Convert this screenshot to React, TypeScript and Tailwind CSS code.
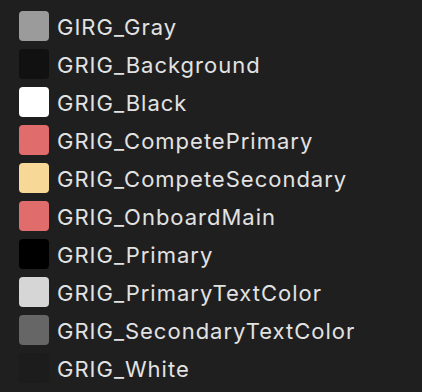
const colors = [
  { name: "GIRG_Gray", swatch: "bg-[#9b9b9b]" },
  { name: "GRIG_Background", swatch: "bg-[#111111]" },
  { name: "GRIG_Black", swatch: "bg-[#ffffff]" },
  { name: "GRIG_CompetePrimary", swatch: "bg-[#e06d6b]" },
  { name: "GRIG_CompeteSecondary", swatch: "bg-[#f8d896]" },
  { name: "GRIG_OnboardMain", swatch: "bg-[#e06d6b]" },
  { name: "GRIG_Primary", swatch: "bg-[#000000]" },
  { name: "GRIG_PrimaryTextColor", swatch: "bg-[#d6d6d6]" },
  { name: "GRIG_SecondaryTextColor", swatch: "bg-[#666666]" },
  { name: "GRIG_White", swatch: "bg-[#1c1c1c]" },
];

export default function App() {
  return (
    <div className="w-[422px] h-[392px] bg-[#1f1f1f] pt-[11px] pl-[19px] font-['Inter',sans-serif]">
      <ul className="flex flex-col gap-[8px]">
        {colors.map((c) => (
          <li key={c.name} className="flex items-center gap-[8px] h-[30px]">
            <div className={`w-[30px] h-[30px] rounded-[4px] ${c.swatch}`} />
            <span className="text-[22px] tracking-[1px] text-[#e2e2e2] leading-none pt-[2px]">{c.name}</span>
          </li>
        ))}
      </ul>
    </div>
  );
}
